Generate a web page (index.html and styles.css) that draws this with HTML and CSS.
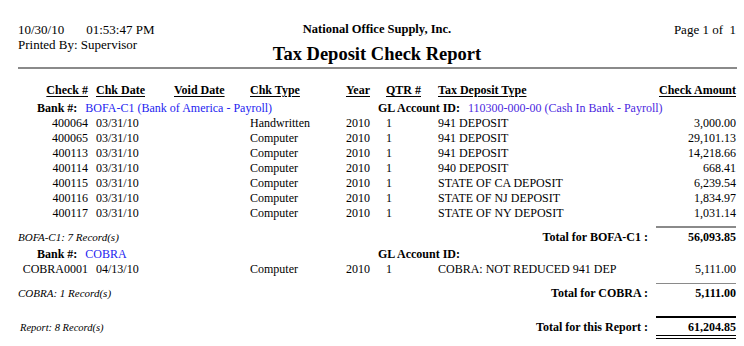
FILE: index.html
```html
<!DOCTYPE html>
<html>
<head>
<meta charset="utf-8">
<link rel="stylesheet" href="styles.css">
</head>
<body>
<div class="page">
  <div class="head">
    <div class="head-left">
      <div><span>10/30/10</span><span class="time">01:53:47 PM</span></div>
      <div>Printed By: Supervisor</div>
    </div>
    <div class="head-center">
      <div class="company">National Office Supply, Inc.</div>
      <div class="title">Tax Deposit Check Report</div>
    </div>
    <div class="head-right">Page 1 of &nbsp;1</div>
  </div>
  <div class="rule"></div>

  <div class="row colhead">
    <div class="c-num"><u>Check #</u></div>
    <div><u>Chk Date</u></div>
    <div><u>Void Date</u></div>
    <div><u>Chk Type</u></div>
    <div><u>Year</u></div>
    <div><u>QTR #</u></div>
    <div><u>Tax Deposit Type</u></div>
    <div class="c-amt"><u>Check Amount</u></div>
  </div>

  <div class="bank">
    <div class="bank-id"><b>Bank #:</b><span class="link-bank">BOFA-C1 (Bank of America - Payroll)</span></div>
    <div class="gl"><b>GL Account ID:</b><span class="link-gl">110300-000-00 (Cash In Bank - Payroll)</span></div>
  </div>
  <div class="row"><div class="c-num">400064</div><div>03/31/10</div><div></div><div>Handwritten</div><div>2010</div><div>1</div><div>941 DEPOSIT</div><div class="c-amt">3,000.00</div></div>
  <div class="row"><div class="c-num">400065</div><div>03/31/10</div><div></div><div>Computer</div><div>2010</div><div>1</div><div>941 DEPOSIT</div><div class="c-amt">29,101.13</div></div>
  <div class="row"><div class="c-num">400113</div><div>03/31/10</div><div></div><div>Computer</div><div>2010</div><div>1</div><div>941 DEPOSIT</div><div class="c-amt">14,218.66</div></div>
  <div class="row"><div class="c-num">400114</div><div>03/31/10</div><div></div><div>Computer</div><div>2010</div><div>1</div><div>940 DEPOSIT</div><div class="c-amt">668.41</div></div>
  <div class="row"><div class="c-num">400115</div><div>03/31/10</div><div></div><div>Computer</div><div>2010</div><div>1</div><div>STATE OF CA DEPOSIT</div><div class="c-amt">6,239.54</div></div>
  <div class="row"><div class="c-num">400116</div><div>03/31/10</div><div></div><div>Computer</div><div>2010</div><div>1</div><div>STATE OF NJ DEPOSIT</div><div class="c-amt">1,834.97</div></div>
  <div class="row"><div class="c-num">400117</div><div>03/31/10</div><div></div><div>Computer</div><div>2010</div><div>1</div><div>STATE OF NY DEPOSIT</div><div class="c-amt">1,031.14</div></div>

  <div class="total total-bofa">
    <div class="records">BOFA-C1: 7 Record(s)</div>
    <div class="total-label">Total for BOFA-C1 :</div>
    <div class="total-amt">56,093.85</div>
  </div>

  <div class="bank bank-2">
    <div class="bank-id"><b>Bank #:</b><span class="link-bank">COBRA</span></div>
    <div class="gl"><b>GL Account ID:</b></div>
  </div>
  <div class="row"><div class="c-num">COBRA0001</div><div>04/13/10</div><div></div><div>Computer</div><div>2010</div><div>1</div><div>COBRA: NOT REDUCED 941 DEP</div><div class="c-amt">5,111.00</div></div>

  <div class="total total-cobra">
    <div class="records">COBRA: 1 Record(s)</div>
    <div class="total-label">Total for COBRA :</div>
    <div class="total-amt">5,111.00</div>
  </div>

  <div class="total total-report">
    <div class="records records-report">Report: 8 Record(s)</div>
    <div class="total-label">Total for this Report :</div>
    <div class="total-amt">61,204.85</div>
  </div>
</div>
</body>
</html>
```

FILE: styles.css
```css
html, body {
  margin: 0;
  padding: 0;
  background: #ffffff;
}

body {
  font-family: "Liberation Serif", "Times New Roman", serif;
  font-size: 12px;
  line-height: 15px;
  color: #000000;
}

.page {
  width: 718px;
  padding: 22px 8px 0 18px;
}

.head {
  display: grid;
  grid-template-columns: 1fr auto 1fr;
}

.head-left,
.head-right {
  font-size: 13px;
}

.time {
  margin-left: 22px;
}

.head-center {
  text-align: center;
}

.company {
  font-weight: bold;
  font-size: 12.5px;
}

.title {
  font-size: 18.5px;
  line-height: 20px;
  font-weight: bold;
  margin-top: 7px;
}

.head-right {
  text-align: right;
}

.rule {
  height: 2px;
  background: #8a8a8a;
  margin: 3px -1px 0 0;
}

.row {
  display: grid;
  grid-template-columns: 78px 78px 76px 96px 40px 52px 1fr 100px;
  white-space: nowrap;
}

.c-num {
  text-align: right;
  padding-right: 8px;
}

.c-amt {
  text-align: right;
}

.colhead {
  font-weight: bold;
  margin-top: 14px;
}

.colhead u {
  text-decoration-thickness: 1px;
  text-underline-offset: 2px;
}

.bank {
  display: grid;
  grid-template-columns: 360px 1fr;
  margin-top: 3px;
  white-space: nowrap;
}

.bank-id {
  padding-left: 19px;
}

.bank b,
.gl b {
  margin-right: 8px;
}

.link-bank {
  color: #2424f0;
}

.link-gl {
  color: #4b28e0;
}

.bank-2 {
  margin-top: 2px;
}

.total {
  display: flex;
  align-items: baseline;
  white-space: nowrap;
}

.records {
  flex: 1;
  font-style: italic;
  font-size: 11px;
}

.records-report {
  padding-left: 2px;
  font-size: 10.5px;
}

.total-label {
  font-weight: bold;
}

.total-amt {
  width: 80px;
  margin-left: 8px;
  text-align: right;
  font-weight: bold;
}

.total-bofa {
  margin-top: 5px;
}

.total-bofa .total-amt {
  border-top: 2px solid #8a8a8a;
  padding-top: 2px;
}

.total-cobra {
  margin-top: 6px;
}

.total-cobra .total-amt {
  border-top: 1px solid #8a8a8a;
  padding-top: 2px;
}

.total-report {
  margin-top: 15px;
}

.total-report .total-amt {
  border-top: 2px solid #000000;
  border-bottom: 4px double #000000;
  padding-top: 2px;
}
```
